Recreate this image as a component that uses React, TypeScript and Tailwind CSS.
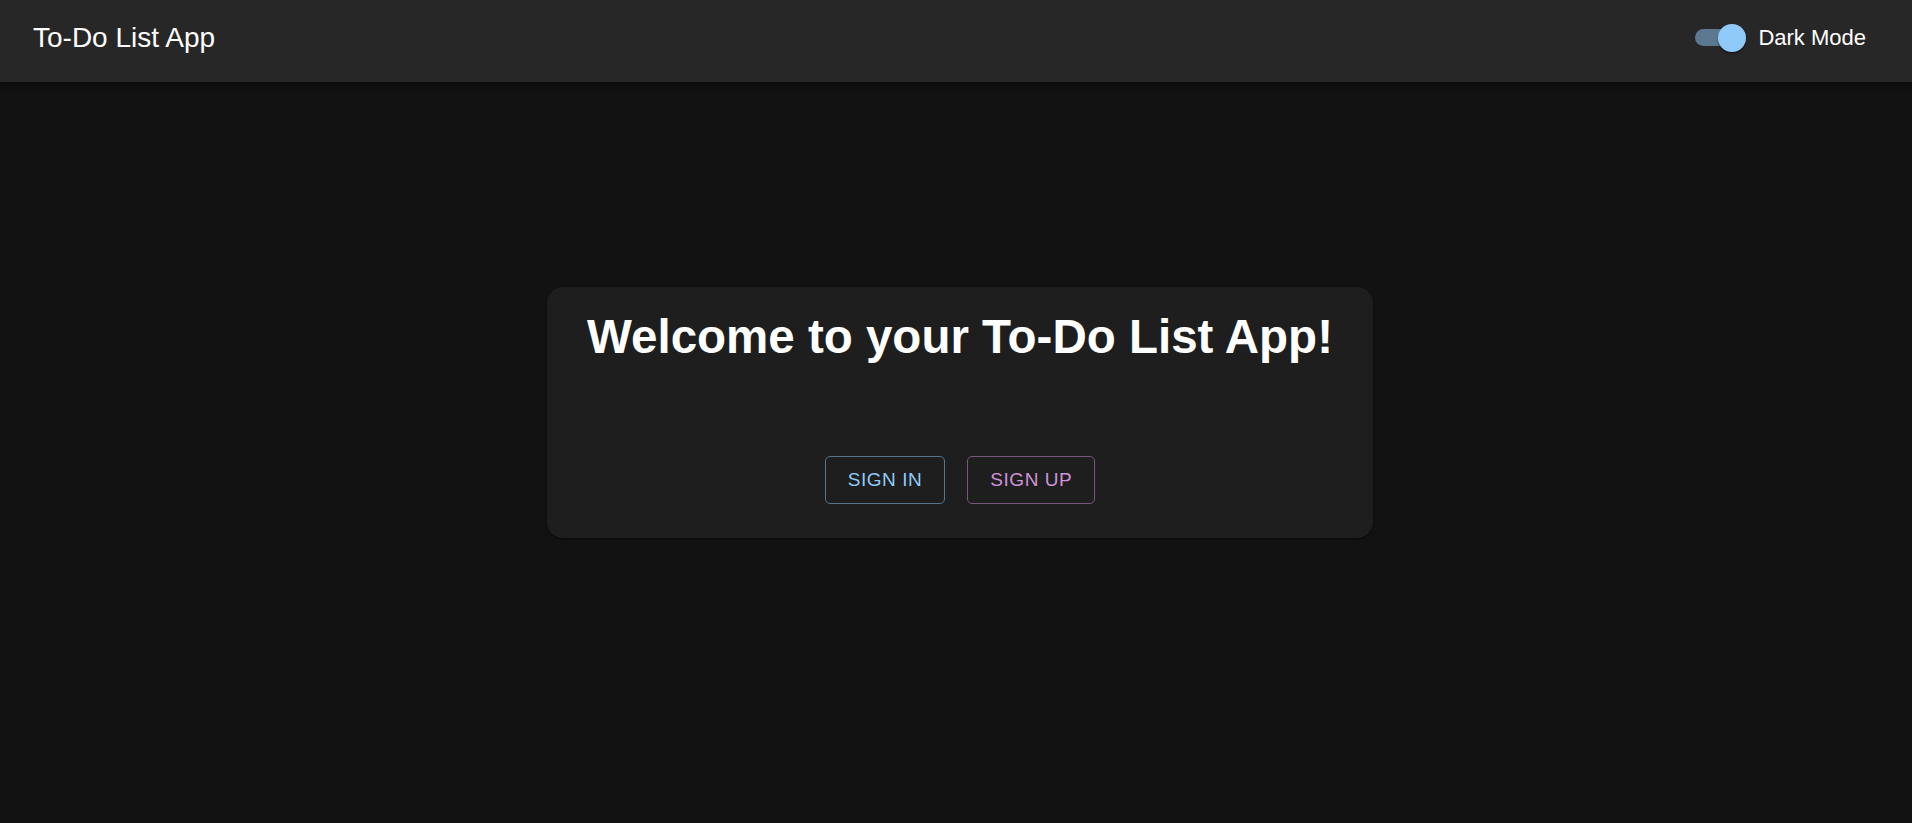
import { useState } from 'react';

// Landing screen for the to-do app: top bar with a theme switch and a
// centered welcome card with the two auth entry points.

const FONT = "font-['Liberation_Sans',Arial,sans-serif]";

function ThemeSwitch({ on, onToggle }: { on: boolean; onToggle: () => void }) {
  return (
    <button
      type="button"
      role="switch"
      aria-checked={on}
      onClick={onToggle}
      className="relative h-[28px] w-[51px] shrink-0"
    >
      <span className="absolute left-0 top-[5px] h-[17px] w-[47px] rounded-full bg-[#5b7890]" />
      <span
        className={`absolute top-0 h-[28px] w-[28px] rounded-full bg-[#90caf9] shadow-[0_2px_2px_rgba(0,0,0,0.35)] ${
          on ? 'right-0' : 'left-0'
        }`}
      />
    </button>
  );
}

export default function App() {
  const [dark, setDark] = useState(true);

  return (
    <div className={`min-h-[823px] bg-[#121212] text-white ${FONT}`}>
      <header className="flex h-[82px] items-center justify-between bg-[#272727] pb-[6px] pl-[33px] pr-[46px] shadow-[0_2px_4px_-1px_rgba(0,0,0,0.2),0_4px_5px_0_rgba(0,0,0,0.14),0_1px_10px_0_rgba(0,0,0,0.12)]">
        <h1 className="text-[28px] font-normal leading-none">To-Do List App</h1>
        <div className="flex items-center gap-[12px]">
          <ThemeSwitch on={dark} onToggle={() => setDark((d) => !d)} />
          <span className="text-[22px] leading-none">Dark Mode</span>
        </div>
      </header>

      <main className="flex justify-center pl-[8px] pt-[205px]">
        <div className="flex w-[826px] flex-col items-center rounded-2xl bg-[#1e1e1e] pb-[34px] pt-[22px] shadow-[0_2px_1px_-1px_rgba(0,0,0,0.2),0_1px_1px_0_rgba(0,0,0,0.14),0_1px_3px_0_rgba(0,0,0,0.12)]">
          <h2 className="text-[47.5px] font-bold leading-[55px]">Welcome to your To-Do List App!</h2>
          <div className="mt-[92px] flex gap-[22px]">
            <button
              type="button"
              className="h-[48px] rounded-[5px] border border-[#57748b] px-[22px] text-[19px] uppercase tracking-[0.55px] text-[#90caf9]"
            >
              Sign In
            </button>
            <button
              type="button"
              className="h-[48px] rounded-[5px] border border-[#76587b] px-[22px] text-[19px] uppercase tracking-[0.55px] text-[#ce93d8]"
            >
              Sign Up
            </button>
          </div>
        </div>
      </main>
    </div>
  );
}
